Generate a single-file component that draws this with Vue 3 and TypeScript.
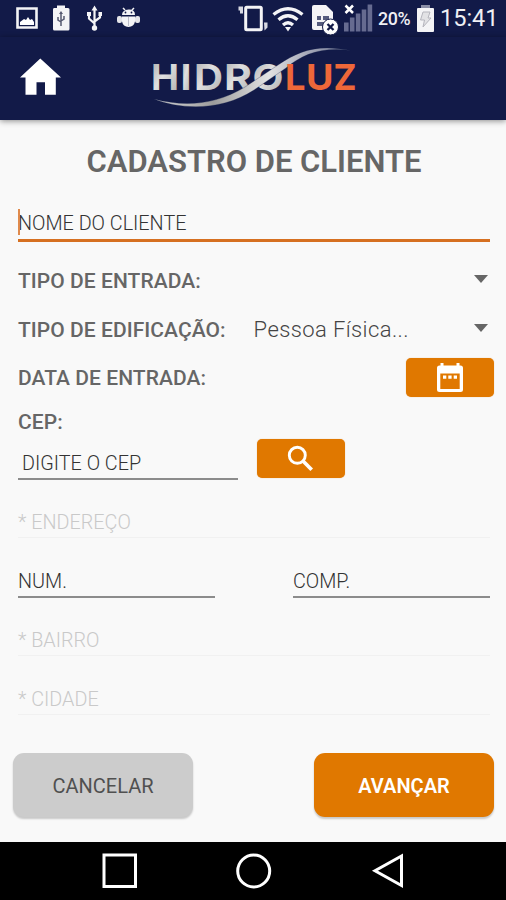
<script setup lang="ts">
import { ref } from 'vue'

interface Letter {
  char: string
  x: number
  width: number
}

const silver: Letter[] = [
  { char: 'H', x: 11, width: 28 },
  { char: 'I', x: 40.5, width: 11 },
  { char: 'D', x: 54, width: 29 },
  { char: 'R', x: 84, width: 28 },
  { char: 'O', x: 112.5, width: 31 },
]
const orange: Letter[] = [
  { char: 'L', x: 145, width: 20.5 },
  { char: 'U', x: 166, width: 27.5 },
  { char: 'Z', x: 193.5, width: 23 },
]
const signalBars = [9, 14, 18, 22, 27]
const buildingType = ref('Pessoa Física...')
</script>

<template>
  <div class="screen">
    <div class="status">
      <svg class="status-left" width="150" height="37" viewBox="0 0 150 37">
        <path d="M17.500 8.500h19v19h-19z" fill="none" stroke="#f4f4f6" stroke-width="2.600" />
        <path d="M20 25v-3l4-3 2 1 2-3 2 3 2-1 2 3v3z" fill="#fff" />
        <path d="M54 8h3V5.500h8V8h3q1.500 0 1.500 1.500V29q0 1.500-1.500 1.500H54.500Q53 30.500 53 29V9.500Q53 8 54 8z" fill="#f4f4f6" />
        <path d="M61 13v13M58 17v3l3 2M64 16v3l-3 2" fill="none" stroke="#555970" stroke-width="1.500" />
        <path d="M61 11l-2 3h4z" fill="#555970" />
        <g fill="none" stroke="#f4f4f6" stroke-width="2.200">
          <path d="M94.500 9v19M89 14v4.500l5.500 5M100 14v3.500l-5.500 4" />
        </g>
        <path d="M94.500 5.500l-3 5h6zM87 12h4v4h-4zM98.500 12h3.500v4h-3.500z" fill="#f4f4f6" />
        <circle cx="94.500" cy="28" r="2.700" fill="#f4f4f6" />
        <path d="M122 15q0-5 6.500-5.500t6.500 5.500zM122 16.500h13v5q-1 5-6.500 5.500-5.500-.5-6.500-5.500z" fill="#f4f4f6" />
        <path d="M125 10l-2-2M132 10l2-2" stroke="#f4f4f6" stroke-width="1.500" />
        <rect x="117" y="16" width="5" height="7" rx="2" fill="#e4e4e8" />
        <rect x="135" y="16" width="5" height="7" rx="2" fill="#e4e4e8" />
        <circle cx="125.500" cy="12.500" r=".9" fill="#121a48" />
        <circle cx="131.500" cy="12.500" r=".9" fill="#121a48" />
        <path d="M128.500 17v9" stroke="#bbbdc8" />
      </svg>
      <svg class="status-right" width="140" height="37" viewBox="236 0 140 37">
        <rect x="245.700" y="7.200" width="15.600" height="22.600" rx="1" fill="none" stroke="#f4f4f6" stroke-width="3" />
        <path d="M238.500 6.500h4.500v7h-3v-3h-1.500zM264 22.500h3.500v5l-3 3z" fill="#d8d9e2" />
        <g fill="none" stroke="#f4f4f6" stroke-width="3.300">
          <path d="M273.500 14.500q14.500-11.500 29 0" />
          <path d="M278.500 19.800q9.500-8 19 0" />
          <path d="M283 25q5-4.500 10 0" />
        </g>
        <path d="M285 27h6l-3 4.500z" fill="#f4f4f6" />
        <path d="M312 7q0-2 2-2h12l7 7v16q0 2-2 2h-17q-2 0-2-2z" fill="#f4f4f6" />
        <path d="M317 16h4v4h-4zM323 16h6v4h-6zM317 22h7v4h-7z" fill="#555b7d" />
        <circle cx="330.500" cy="27" r="8" fill="#fff" stroke="#121a48" stroke-width="1" />
        <path d="M327.500 24l6 6M333.500 24l-6 6" stroke="#121a48" stroke-width="2.300" />
        <rect v-for="(h, i) in signalBars" :key="h" :x="344 + i * 5.900" :y="31.500 - h" width="4.600" :height="h" fill="#666b90" />
        <path d="M345.500 5.500l7.500 7.500M353 5.500l-7.500 7.500" stroke="#fff" stroke-width="2.500" />
      </svg>
      <span class="percent">20%</span>
      <svg class="battery" width="20" height="37" viewBox="415 0 20 37">
        <path d="M421 5h9v3.500h-9z" fill="#8a8ea6" />
        <rect x="417" y="8" width="17" height="24" rx="1" fill="#f4f4f6" />
        <path d="M423 12h7l-2 6h3l-8 9 1.500-7h-4z" fill="#e2e2e5" stroke="#b5b5bd" stroke-width="1" />
      </svg>
      <span class="clock">15:41</span>
    </div>

    <header class="header">
      <svg class="home" width="42" height="40" viewBox="0 0 42 40">
        <path d="M20.300 1.500L41 20.500h-5.200v17.300H25V25.300h-8.500v12.500H5.500V20.500H0z" fill="#fff" />
      </svg>
      <svg class="logo" width="230" height="82" viewBox="0 0 230 82">
        <defs>
          <linearGradient id="metal" x1="0" y1="0" x2="1" y2="1">
            <stop offset="0" stop-color="#a5a5a5" />
            <stop offset=".45" stop-color="#e0e0e0" />
            <stop offset="1" stop-color="#a8a8a8" />
          </linearGradient>
          <linearGradient id="sweep" x1="0" y1="0" x2="1" y2="0">
            <stop offset="0" stop-color="#dddddd" />
            <stop offset=".3" stop-color="#9c9c9c" />
            <stop offset=".58" stop-color="#e2e2e2" />
            <stop offset=".8" stop-color="#a0a4b5" />
            <stop offset="1" stop-color="#6d7390" />
          </linearGradient>
        </defs>
        <g class="logo-text" fill="url(#metal)">
          <text v-for="l in silver" :key="l.char" :x="l.x" y="53" :textLength="l.width" lengthAdjust="spacingAndGlyphs">{{ l.char }}</text>
        </g>
        <path d="M14 62C45 70 75 68 105 50L138 28C160 13 178 7 211 13.500C181 10 163 17 146 31L114 53C82 74 42 73 14 62z" fill="url(#sweep)" stroke="#121a48" stroke-width=".3" />
        <g class="logo-text" fill="#ee6739">
          <text v-for="l in orange" :key="l.char" :x="l.x" y="53" :textLength="l.width" lengthAdjust="spacingAndGlyphs">{{ l.char }}</text>
        </g>
      </svg>
    </header>

    <main class="form">
      <h1 class="title"><span>CADASTRO DE CLIENTE</span></h1>
      <div class="field focused"><i class="caret"></i><span>NOME DO CLIENTE</span></div>
      <div class="row first">
        <span class="label">TIPO DE ENTRADA:</span>
        <i class="arrow"></i>
      </div>
      <div class="row second">
        <span class="label">TIPO DE EDIFICAÇÃO:</span>
        <span class="value">{{ buildingType }}</span>
        <i class="arrow"></i>
      </div>
      <div class="row third">
        <span class="label">DATA DE ENTRADA:</span>
        <button class="icon-button date" aria-label="Data">
          <svg width="28" height="32" viewBox="0 0 28 32">
            <path d="M6 1v4M22 1v4" stroke="#fff" stroke-width="3" />
            <path fill-rule="evenodd" d="M3.500 3.500h21q2.500 0 2.500 2.500v21.500q0 2.500-2.500 2.500h-21Q1 30 1 27.500V6Q1 3.500 3.500 3.500zM4.300 11.500v15.500h19.400V11.500z" fill="#fff" />
            <path d="M7 13.500h3.300v3.300H7zM12.300 13.500h3.300v3.300h-3.300zM17.700 13.500H21v3.300h-3.300z" fill="#fff" />
          </svg>
        </button>
      </div>
      <div class="label cep-label">CEP:</div>
      <div class="cep">
        <div class="field cep-field"><span>DIGITE O CEP</span></div>
        <button class="icon-button search" aria-label="Buscar">
          <svg width="28" height="28" viewBox="0 0 28 28">
            <circle cx="10.300" cy="10.300" r="8" fill="none" stroke="#fff" stroke-width="2.900" />
            <path d="M16 16l8.700 8.700" stroke="#fff" stroke-width="3.700" />
          </svg>
        </button>
      </div>
      <div class="field disabled address"><span>* ENDEREÇO</span></div>
      <div class="pair">
        <div class="field"><span>NUM.</span></div>
        <div class="field"><span>COMP.</span></div>
      </div>
      <div class="field disabled bairro"><span>* BAIRRO</span></div>
      <div class="field disabled cidade"><span>* CIDADE</span></div>
      <div class="actions">
        <button class="action cancel"><span>CANCELAR</span></button>
        <button class="action next"><span>AVANÇAR</span></button>
      </div>
    </main>

    <nav class="nav">
      <svg width="506" height="58" viewBox="0 0 506 58" fill="none" stroke="#fff" stroke-width="3">
        <path d="M104 13h31.500v31.500H104z" />
        <circle cx="253.700" cy="29" r="16" />
        <path d="M401.500 14v29.500L375 28.800z" />
      </svg>
    </nav>
  </div>
</template>

<style>
body {
  margin: 0;
  background: #f9f9f9;
}
</style>

<style scoped>
.screen {
  width: 506px;
  height: 900px;
  display: flex;
  flex-direction: column;
  background: #f9f9f9;
  font-family: Roboto, "Liberation Sans", sans-serif;
  overflow: hidden;
}
svg {
  display: block;
  flex: none;
}
button {
  border: 0;
  padding: 0;
  font: inherit;
}
.status {
  height: 37px;
  flex: none;
  display: flex;
  align-items: center;
  background: #121a48;
  color: #f0f0f4;
}
.status-right {
  margin-left: 86px;
}
.percent {
  width: 39px;
  margin-left: 2px;
  font-size: 17.8px;
  font-weight: 500;
  line-height: 37px;
  letter-spacing: -0.3px;
  white-space: nowrap;
}
.battery {
  margin-left: -2px;
}
.clock {
  margin-left: 5px;
  font-size: 23.5px;
  line-height: 39px;
}
.header {
  height: 83px;
  flex: none;
  display: flex;
  background: #121a48;
  box-shadow: 0 1px 6px rgba(0, 0, 0, 0.45);
}
.home {
  margin: 20px 0 0 20px;
}
.logo {
  margin-left: 78px;
}
.logo-text {
  font: 700 36px Inter, "Liberation Sans", sans-serif;
}
.form {
  flex: 1;
  display: flex;
  flex-direction: column;
  padding: 0 16px 0 18px;
}
.title {
  margin: 22px 0 0;
  text-align: center;
  font-size: 31px;
  line-height: 40px;
  font-weight: 600;
  color: #666;
  white-space: nowrap;
}
.field {
  box-sizing: border-box;
  height: 35px;
  flex: none;
  border-bottom: 2px solid #8c8c8c;
  font-size: 19.800px;
  line-height: 37px;
  font-weight: 300;
  color: #333;
  white-space: nowrap;
  position: relative;
}
.focused {
  height: 36px;
  margin-top: 24px;
  line-height: 35px;
  border-bottom: 3px solid #d67021;
}
.caret {
  position: absolute;
  left: 0;
  top: 3px;
  width: 2px;
  height: 26px;
  background: #e08a4c;
}
.row {
  display: flex;
  align-items: center;
  height: 40px;
  flex: none;
}
.first {
  margin-top: 18px;
}
.second {
  margin-top: 9px;
}
.third {
  height: 39px;
  margin-top: 9px;
  margin-right: -4px;
}
.label {
  padding-top: 1px;
  font-size: 21px;
  line-height: 40px;
  font-weight: 500;
  color: #666;
  letter-spacing: 0.05px;
  white-space: nowrap;
}
.value {
  margin-left: 28px;
  padding-top: 1px;
  font-size: 22px;
  font-weight: 300;
  color: #444;
  letter-spacing: 0.4px;
}
.arrow {
  margin: -2px 2px 0 auto;
  border-left: 7px solid transparent;
  border-right: 7px solid transparent;
  border-top: 8px solid #666;
}
.icon-button {
  display: flex;
  justify-content: center;
  width: 88px;
  height: 39px;
  border-radius: 5px;
  background: #e07800;
  box-shadow: 0 0 1px rgba(224, 120, 0, 0.6);
}
.date {
  margin-left: auto;
  padding-top: 4px;
}
.cep-label {
  height: 39px;
  margin-top: 4px;
  flex: none;
}
.cep {
  display: flex;
  height: 39px;
  flex: none;
  margin-top: -2px;
}
.cep-field {
  width: 220px;
  height: 41px;
  padding: 7px 0 0 4px;
  line-height: 35px;
}
.search {
  margin-left: 19px;
  padding-top: 6px;
}
.disabled {
  height: 34px;
  color: #c9c9c9;
  border-bottom: 1px solid #f1f1f1;
}
.address {
  margin-top: 26px;
}
.pair {
  display: flex;
  justify-content: space-between;
  margin-top: 25px;
}
.pair .field {
  width: 197px;
}
.bairro {
  margin-top: 24px;
  line-height: 38px;
}
.cidade {
  margin-top: 25px;
}
.actions {
  display: flex;
  justify-content: space-between;
  margin: 38px -4px 0 -5px;
}
.action {
  width: 180px;
  height: 64px;
  border-radius: 11px;
  font-size: 20px;
  line-height: 66px;
  box-shadow: 0 2px 2px rgba(0, 0, 0, 0.2);
}
.cancel {
  background: #ccc;
  color: #505050;
}
.next {
  background: #e07800;
  color: #fff;
  font-weight: 600;
}
.nav {
  height: 58px;
  flex: none;
  background: #000;
}
</style>
